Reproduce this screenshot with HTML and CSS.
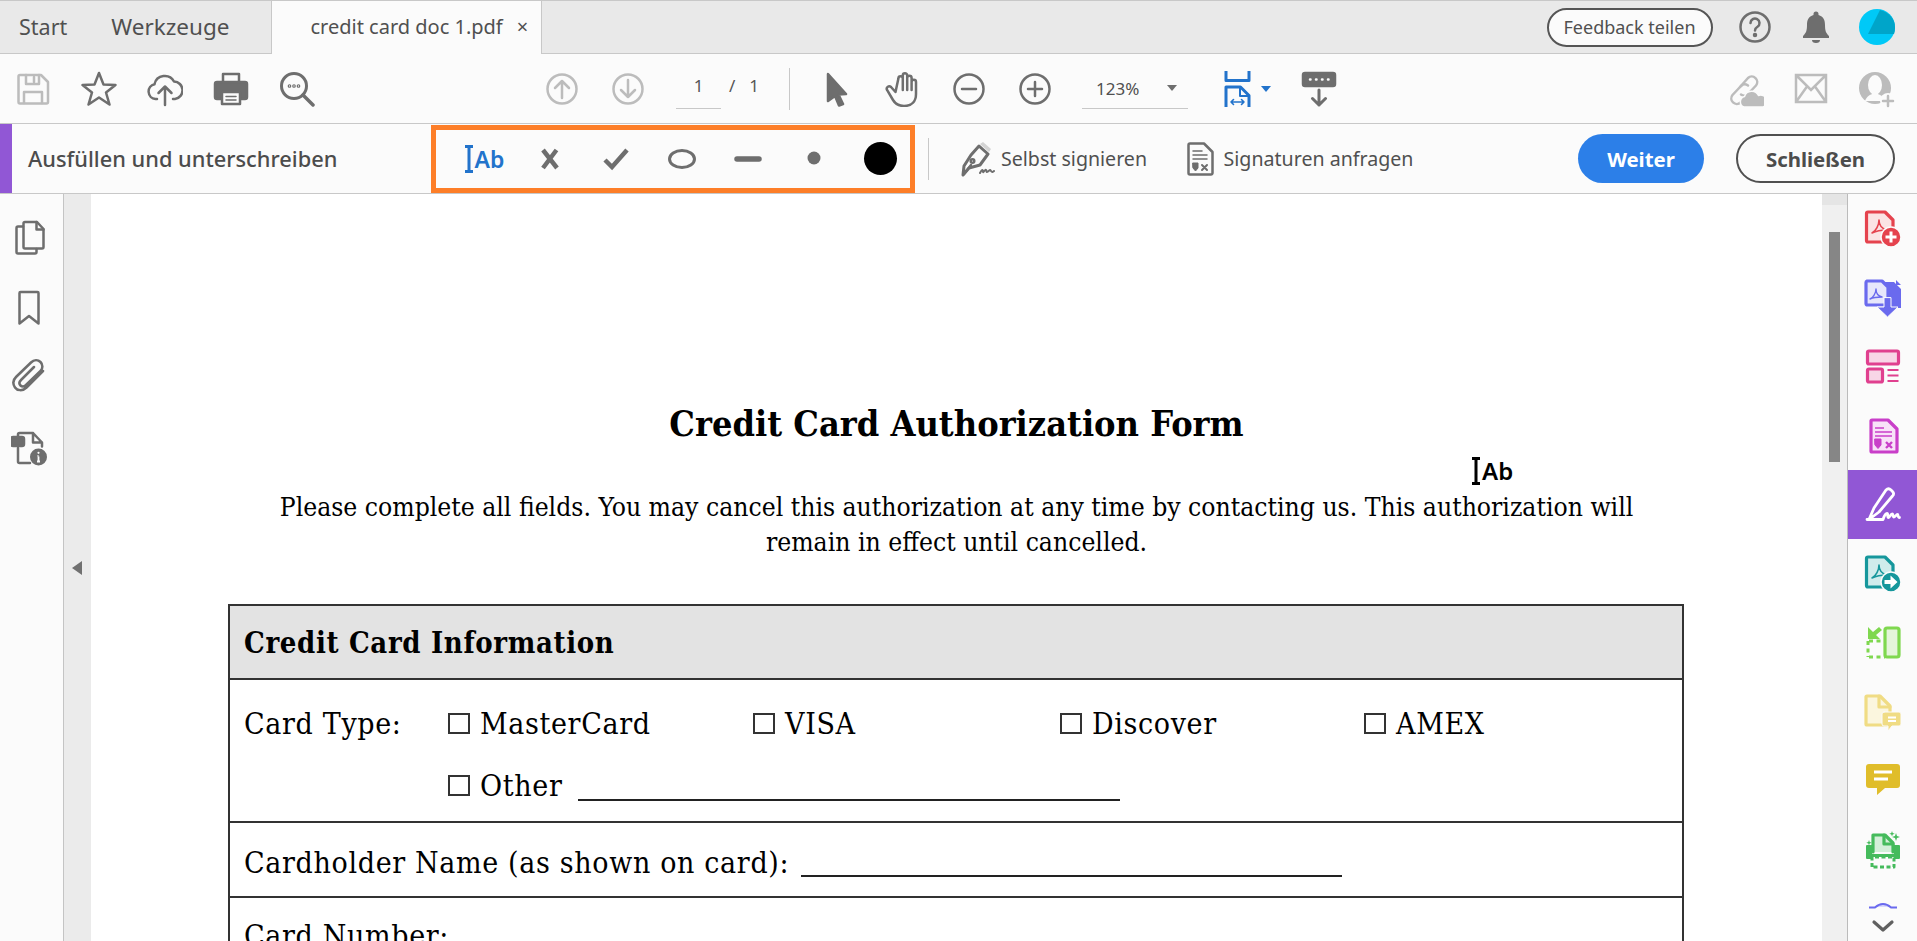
FILE: index.html
```html
<!DOCTYPE html>
<html lang="de">
<head>
<meta charset="utf-8">
<title>credit card doc 1.pdf</title>
<link rel="stylesheet" href="styles.css">
</head>
<body>
<header class="tabs">
  <a class="tab tab-start">Start</a>
  <a class="tab tab-tools">Werkzeuge</a>
  <div class="tab-doc"><span>credit card doc 1.pdf</span><span class="close">×</span></div>
  <div class="tabs-right">
    <button class="feedback">Feedback teilen</button>
    <svg class="ic i-help" width="36" height="36" viewBox="0 0 36 36"><circle cx="18" cy="18" r="14.5"/><path d="M13.5 14a4.5 4.5 0 1 1 7 3.8c-1.6 1-2.5 2-2.5 3.7"/><circle cx="18" cy="26" r="1" fill="currentColor"/></svg>
    <svg class="ic i-bell" width="30" height="36" viewBox="0 0 30 36"><path fill="currentColor" stroke="none" d="M12.5 5a2.5 2.5 0 0 1 5 0v1c5 1.500 6.500 5 6.500 10 0 6 1 8 4 11v2H2v-2c3-3 4-5 4-11 0-5 1.500-8.500 6.500-10zM11 31h8a4 3 0 0 1-8 0z"/></svg>
    <svg class="i-avatar" width="36" height="36" viewBox="0 0 36 36"><circle cx="18" cy="18" r="18" fill="#00c9f7"/><path d="M21 1 9 25h26c1-3 1-5 1-7 0-8-6-15-15-17z" fill="#00a5c9"/></svg>
  </div>
</header>

<nav class="toolbar">
  <div class="tgroup">
    <div class="slot dis"><svg class="ic" width="36" height="36" viewBox="0 0 36 36"><path d="M5 4h21l7 7v20a1.500 1.500 0 0 1-1.500 1.500H5A1.500 1.500 0 0 1 3.500 31V5.500A1.500 1.500 0 0 1 5 4z"/><path d="M11 4v9h13V4M19 6v5M9 32V21h18v11"/></svg></div>
    <div class="slot"><svg class="ic" width="36" height="36" viewBox="0 0 36 36"><path d="M18 2l4.500 11.500 12 .5L25 21.500l3.500 12L18 26.500 7.500 33.500l3.500-12L1.500 14l12-.5z"/></svg></div>
    <div class="slot"><svg class="ic" width="36" height="36" viewBox="0 0 36 36"><path d="M10 28H8.500a7.500 7.500 0 0 1-1-14.800A10.500 10.500 0 0 1 27 10.500a8.800 8.800 0 0 1 1 17.500h-2"/><path d="M18 34V16M11.500 22l6.500-6.500 6.500 6.500"/></svg></div>
    <div class="slot"><svg class="ic" width="36" height="36" viewBox="0 0 36 36"><path d="M10 11V3h16v8"/><path fill="currentColor" d="M4 11h28a2 2 0 0 1 2 2v13a2 2 0 0 1-2 2H4a2 2 0 0 1-2-2V13a2 2 0 0 1 2-2z"/><path fill="#fbfbfb" d="M9 21h18v12H9z"/><path d="M13 25.500h10M13 29h10" stroke-width="1.500"/></svg></div>
    <div class="slot"><svg class="ic" width="36" height="36" viewBox="0 0 36 36"><circle cx="15" cy="15" r="12.500" stroke-width="3"/><path d="M24 24l10 10" stroke-width="3.500"/><circle cx="10.500" cy="15" r=".6"/><circle cx="15" cy="15" r=".6"/><circle cx="19.500" cy="15" r=".6"/></svg></div>
  </div>
  <div class="tgroup nav">
    <div class="slot dis"><svg class="ic" width="36" height="36" viewBox="0 0 36 36"><circle cx="18" cy="18" r="14.500"/><path d="M18 27V10M11 17l7-7 7 7"/></svg></div>
    <div class="slot dis"><svg class="ic" width="36" height="36" viewBox="0 0 36 36"><circle cx="18" cy="18" r="14.500"/><path d="M18 9v17M11 19l7 7 7-7"/></svg></div>
  </div>
  <div class="pager"><span class="page-in">1</span><span class="page-sep">/</span><span class="page-total">1</span></div>
  <div class="vsep"></div>
  <div class="tgroup tools">
    <div class="slot"><svg class="ic" width="36" height="36" viewBox="0 0 36 36"><path fill="currentColor" d="M9 3l18 20-7.500.5L24 33l-4 1.500-4-9.500-7 5z"/></svg></div>
    <div class="slot"><svg class="ic" width="36" height="36" viewBox="0 0 36 36"><path d="M10.500 21l-4.500-5a2.500 2.500 0 0 0-3.800 3.200L8 29c3 5 7 6 11 6 8 0 12-5 12-12V11a2.200 2.200 0 0 0-4.400 0v8-12a2.200 2.200 0 0 0-4.400 0v12V4.500a2.200 2.200 0 0 0-4.400 0V19 7.500a2.200 2.200 0 0 0-4.400 0z"/></svg></div>
    <div class="slot"><svg class="ic" width="36" height="36" viewBox="0 0 36 36"><circle cx="18" cy="18" r="14.500"/><path d="M11 18h14"/></svg></div>
    <div class="slot"><svg class="ic" width="36" height="36" viewBox="0 0 36 36"><circle cx="18" cy="18" r="14.500"/><path d="M11 18h14M18 11v14"/></svg></div>
  </div>
  <div class="zoom-box"><span>123%</span><i class="tri"></i></div>
  <div class="fit">
    <svg class="ic blue" width="27" height="36" viewBox="0 0 27 36"><path d="M2 0v9.500h23V0" stroke-linecap="butt" stroke-width="3"/><path d="M2 36V16h14.500l8.500 8.500V36" stroke-linecap="butt" stroke-width="3"/><path d="M16 16v9h9" stroke-width="2"/><path d="M7 31h13M9.500 28.500L7 31l2.500 2.500M17.500 28.500L20 31l-2.500 2.500" stroke-width="1.600"/></svg>
    <i class="tri blue-tri"></i>
  </div>
  <div class="slot read"><svg class="ic" width="36" height="36" viewBox="0 0 36 36"><rect x="2" y="2" width="32" height="13" rx="2" fill="currentColor"/><path d="M9 8.500h.5M15 8.500h.5M21 8.500h.5M27 8.500h.5" stroke="#fbfbfb" stroke-width="2.500"/><path d="M18 19v15M11.500 27.500l6.500 6.500 6.500-6.500" stroke-width="3"/></svg></div>
  <div class="tgroup share">
    <div class="slot dis"><svg class="ic" width="38" height="38" viewBox="0 0 38 38"><path stroke-width="2.500" d="M14 17l8-9a5.500 5.500 0 0 1 8 7.500l-8 8.500a5.500 5.500 0 0 1-7 .5"/><path stroke-width="2.500" d="M22 15.500a5.500 5.500 0 0 0-7 .5L6.500 25a5.500 5.500 0 0 0 8 7.500l3-3"/><path fill="#bcbcbc" stroke="#fbfbfb" stroke-width="1.500" d="M18 37a5.500 5.500 0 0 1 .5-10.500 7.500 7.500 0 0 1 14-1 6 6 0 0 1 4.500 11.500z"/></svg></div>
    <div class="slot dis"><svg class="ic" width="36" height="36" viewBox="0 0 36 36"><path d="M3 5h30v27H3zM3 5l15 15L33 5M3 32l11-15.500M33 32L22 16.500" stroke-linejoin="miter" stroke-linecap="butt"/></svg></div>
    <div class="slot dis"><svg class="ic" width="38" height="38" viewBox="0 0 38 38"><circle cx="17" cy="18" r="16" fill="currentColor" stroke="none"/><ellipse cx="17" cy="15" rx="7" ry="10" fill="#fbfbfb" stroke="none"/><path d="M7 31c2-5 5-6 7-7h6c2 1 5 2 7 7" fill="#fbfbfb" stroke="none"/><circle cx="30" cy="31" r="8" fill="#fbfbfb" stroke="none"/><path d="M30 26v10M25 31h10"/></svg></div>
  </div>
</nav>

<section class="fillbar">
  <div class="accent"></div>
  <h1 class="fill-title">Ausfüllen und unterschreiben</h1>
  <div class="fill-tools">
    <div class="ftool tool-ab"><svg class="ic blue" width="10" height="28" viewBox="0 0 10 28"><path d="M1 1.500h8M1 26.500h8M5 1.500v25" stroke-width="3" stroke-linecap="butt"/></svg><span class="ab">Ab</span></div>
    <div class="ftool"><svg class="ic" width="24" height="24" viewBox="0 0 24 24"><path d="M5 3l14 18M18.500 3L5 21" stroke-width="4.500" stroke-linecap="butt"/></svg></div>
    <div class="ftool"><svg class="ic" width="26" height="24" viewBox="0 0 26 24"><path d="M2 13l7 7L24 3" stroke-width="4.500" stroke-linecap="butt" stroke-linejoin="miter"/></svg></div>
    <div class="ftool"><svg class="ic" width="30" height="24" viewBox="0 0 30 24"><ellipse cx="15" cy="12" rx="12.500" ry="8.500" stroke-width="3"/></svg></div>
    <div class="ftool"><svg class="ic" width="30" height="24" viewBox="0 0 30 24"><path d="M4 12h22" stroke-width="5.500"/></svg></div>
    <div class="ftool"><svg class="ic" width="16" height="24" viewBox="0 0 16 24"><circle cx="8" cy="11" r="6.500" fill="currentColor" stroke="none"/></svg></div>
    <div class="ftool"><span class="swatch"></span></div>
  </div>
  <div class="vsep fill-sep"></div>
  <div class="fill-act act-self">
    <svg class="ic" width="36" height="36" viewBox="0 0 36 36"><path fill="#d4d4d4" stroke="none" d="M21 3l3-2 8 7-2 3z"/><path stroke-width="3" d="M20 5l9 8-8 11-11 3-6 7 1-9 7-11z"/><path d="M5 33l7-9"/><circle cx="13.500" cy="20" r="1.800"/><path d="M21 32c1.500-3 3-4 3-1.500s2-2.500 3-1.500 0 3 2 1.500 2-2 3-.5 2 1 3 0" stroke-width="2"/></svg>
    <span>Selbst signieren</span>
  </div>
  <div class="fill-act act-req">
    <svg class="ic" width="28" height="34" viewBox="0 0 28 34"><path d="M4 1.500h14L26.500 10v21a1.500 1.500 0 0 1-1.500 1.500H4A1.500 1.500 0 0 1 2.500 31V3A1.500 1.500 0 0 1 4 1.500z"/><path d="M7 9h9M7 13h14M7 17h14" stroke-width="1.500"/><path d="M7 21h5v5l-2.500 3-2.500-3z" fill="currentColor" stroke-width="1"/><path d="M16 23l5 5M21 23l-5 5" stroke-width="2"/></svg>
    <span>Signaturen anfragen</span>
  </div>
  <button class="btn-next">Weiter</button>
  <button class="btn-close">Schließen</button>
</section>

<main class="workspace">
  <aside class="rail">
    <div class="rail-item"><svg class="ic" width="36" height="36" viewBox="0 0 36 36"><path d="M12 6.500H7a1.500 1.500 0 0 0-1.500 1.500v24A1.500 1.500 0 0 0 7 33.500h17a1.500 1.500 0 0 0 1.500-1.500v-3"/><path d="M14 2h12l6.500 7v18a1.500 1.500 0 0 1-1.500 1.500H14a1.500 1.500 0 0 1-1.500-1.500V3.500A1.500 1.500 0 0 1 14 2z"/><path d="M25.500 2v7.500h7"/></svg></div>
    <div class="rail-item"><svg class="ic" width="36" height="36" viewBox="0 0 36 36"><path d="M9.500 2h17a1 1 0 0 1 1 1v30.500L18 26 8.500 33.500V3a1 1 0 0 1 1-1z"/></svg></div>
    <div class="rail-item rail-clip"><svg class="ic" width="36" height="36" viewBox="0 0 36 36"><path d="M32 14L15.500 30.500c-4 4-9.500 3-11.500 0s-2.500-7 1-10.500L20 5.500c3-3 7-3 9.500-.5s2.500 6.500 0 9L15 28c-2 2-4 2-5.500.5s-1.500-3.500.5-5.500l13-13"/></svg></div>
    <div class="rail-item"><svg class="ic" width="36" height="36" viewBox="0 0 36 36"><path d="M7 9V4.500A1.500 1.500 0 0 1 8.500 3H22l9 9.500v4M22 3v9.500h9M7 18v13.500A1.500 1.500 0 0 0 8.500 33H19"/><rect x="0" y="7" width="13" height="9" rx="2" fill="currentColor"/><circle cx="27.500" cy="27" r="8.500" fill="currentColor" stroke="none"/><path d="M27.500 26.500v5M26 31.500h3M26.500 26h1" stroke="#fbfbfb" stroke-width="1.800" stroke-linecap="butt"/><circle cx="27.500" cy="22.800" r="1.100" fill="#fbfbfb" stroke="none"/></svg></div>
  </aside>
  <div class="gutter"><i class="collapse"></i></div>

  <article class="page">
    <h2 class="doc-title">Credit Card Authorization Form</h2>
    <p class="doc-intro">Please complete all fields. You may cancel this authorization at any time by contacting us. This authorization will<br>remain in effect until cancelled.</p>
    <div class="doc-table">
      <div class="doc-head">Credit Card Information</div>
      <div class="doc-row row-types">
        <span class="lbl">Card Type:</span>
        <span class="opt"><i class="box"></i>MasterCard</span>
        <span class="opt"><i class="box"></i>VISA</span>
        <span class="opt"><i class="box"></i>Discover</span>
        <span class="opt"><i class="box"></i>AMEX</span>
        <span class="opt opt-other"><i class="box"></i>Other<i class="rule rule-other"></i></span>
      </div>
      <div class="doc-row row-name">Cardholder Name (as shown on card):<i class="rule rule-name"></i></div>
      <div class="doc-row row-number">Card Number:</div>
    </div>
    <div class="cursor"><svg width="10" height="28" viewBox="0 0 10 28"><path d="M1 1.500h8M1 26.500h8M5 1.500v25" stroke="#000" stroke-width="3" fill="none"/></svg><span>Ab</span></div>
  </article>

  <div class="scroller"><div class="scroll-top"></div><div class="scroll-thumb"></div></div>

  <aside class="apps">
    <div class="app"><svg class="ic red" width="38" height="38" viewBox="0 0 38 38"><path fill="#fbe3e4" d="M4 2h17l8 8v22H4a1.500 1.500 0 0 1-1.500-1.500v-27A1.500 1.500 0 0 1 4 2z"/><path d="M8 23c4-2 7-8 7-13 0 5 3 9 8 10-4 0-11 1-15 3z" stroke-width="1.600"/><circle cx="27" cy="27" r="10" fill="currentColor" stroke="#fbfbfb" stroke-width="1.500"/><path d="M27 21.500v11M21.500 27h11" stroke="#fff" stroke-width="3" stroke-linecap="butt"/></svg></div>
    <div class="app"><svg class="ic indigo" width="38" height="38" viewBox="0 0 38 38"><path fill="currentColor" stroke="none" d="M20 3h10l7 7v19H20zM32 1l5 5h-5z"/><path fill="#e6e6fb" d="M3 2h15l6 6v18H3.500A1.500 1.500 0 0 1 2 24.500v-21A1.500 1.500 0 0 1 3 2z"/><path d="M6 20c3-1 6-6 6-10 0 4 2 7 6 8-3 0-8 0-12 2z" stroke-width="1.400"/><path fill="currentColor" stroke="#fbfbfb" stroke-width="1" d="M20 19v9h-7l10.500 10L34 28h-7v-9z"/></svg></div>
    <div class="app"><svg class="ic pink" width="38" height="38" viewBox="0 0 38 38"><rect x="3.500" y="3" width="31" height="13" rx="1.500" fill="#f8d6e7"/><rect x="3.500" y="21" width="15" height="13" rx="1.500" fill="#f8d6e7"/><path d="M23.500 22h11M23.500 27.500h11M23.500 33h11" stroke-width="1.800" stroke-linecap="butt"/></svg></div>
    <div class="app"><svg class="ic magenta" width="34" height="38" viewBox="0 0 34 38"><path fill="#f8e1f8" d="M6 3h16l9 9v22a1 1 0 0 1-1 1H6a1 1 0 0 1-1-1V4a1 1 0 0 1 1-1z"/><path d="M9 11h9M9 15h17M9 19h17" stroke-width="1.600" stroke-linecap="butt"/><path d="M9 22h6v6l-3 3.500L9 28z" fill="currentColor" stroke-width="1"/><path d="M20 25l6 6M26 25l-6 6" stroke-width="2.400" stroke-linecap="butt"/></svg></div>
    <div class="app app-on"><svg class="ic white" width="38" height="38" viewBox="0 0 38 38"><path d="M22 4c1.500-1.500 3.500-1.500 5 0l1.500 1.500c1.500 1.500 1.500 3 0 4.500L15 26l-10 7.500L10 22z" stroke-width="2.800"/><path d="M3 33.500h16c1-3 2-6 4-6 1.500 0 0 4 1.500 4s2-4 4-3.500c1 .5 0 3 1.500 3s2-2.500 3.500-2.500c1 0 0 3 2 3" stroke-width="2.800"/></svg></div>
    <div class="app"><svg class="ic teal" width="38" height="38" viewBox="0 0 38 38"><path fill="#d0ecec" d="M4 2h17l8 8v22H4a1.500 1.500 0 0 1-1.500-1.500v-27A1.500 1.500 0 0 1 4 2z"/><path d="M8 23c4-2 7-8 7-13 0 5 3 9 8 10-4 0-11 1-15 3z" stroke-width="1.600"/><circle cx="27" cy="27" r="10" fill="currentColor" stroke="#fbfbfb" stroke-width="1.500"/><path fill="#fff" stroke="none" d="M20.500 25h6v-4.500l7 6.500-7 6.500V29h-6z"/></svg></div>
    <div class="app"><svg class="ic lime" width="38" height="38" viewBox="0 0 38 38"><rect x="21" y="4" width="14" height="29" rx="2" fill="#e4f5da"/><path d="M5 17h17M5 33h16M4 17v16" stroke-width="3" stroke-dasharray="4 3.500" stroke-linecap="butt"/><path fill="currentColor" stroke="none" d="M4 3v12h12l-4-4 6-5-3-3-6 5z"/></svg></div>
    <div class="app"><svg class="ic pale" width="38" height="38" viewBox="0 0 38 38"><path fill="#fbf6de" d="M3 3h13l10 10v19H3a1 1 0 0 1-1-1V4a1 1 0 0 1 1-1z"/><path d="M15 3v11h11"/><path fill="currentColor" stroke="#fbfbfb" stroke-width="1" d="M20 19h15a2 2 0 0 1 2 2v10a2 2 0 0 1-2 2h-7l-4 5v-5h-4a2 2 0 0 1-2-2V21a2 2 0 0 1 2-2z"/><path d="M24 24.500h8M24 28h8" stroke="#fff" stroke-width="2" stroke-linecap="butt"/></svg></div>
    <div class="app"><svg class="ic gold" width="36" height="36" viewBox="0 0 36 36"><path fill="currentColor" stroke="none" d="M4 1h28a3 3 0 0 1 3 3v18a3 3 0 0 1-3 3H20l-8 7v-7H4a3 3 0 0 1-3-3V4a3 3 0 0 1 3-3z"/><path d="M9 9h18M9 16h14" stroke="#fff" stroke-width="3" stroke-linecap="butt"/></svg></div>
    <div class="app"><svg class="ic green" width="38" height="38" viewBox="0 0 38 38"><path fill="#d4efd9" d="M9 21V4h12l8 8v9"/><path d="M20 4v9h9"/><path fill="currentColor" stroke="none" d="M3 14h5v9h22v-9h5a1 1 0 0 1 1 1v12a1 1 0 0 1-1 1H3a1 1 0 0 1-1-1V15a1 1 0 0 1 1-1z"/><path d="M8 36V26h22v10z" fill="#fbfbfb" stroke-width="3" stroke-dasharray="4 2.500" stroke-linecap="butt"/><path fill="currentColor" stroke="none" d="M32 2l1 3 3 1-3 1-1 3-1-3-3-1 3-1zM28 0l.7 2 2 .7-2 .7-.7 2-.7-2-2-.7 2-.7zM5 9l.7 2 2 .7-2 .7L5 14.500l-.7-2-2-.7 2-.7z"/></svg></div>
    <div class="app-more">
      <svg class="ic indigo" width="30" height="10" viewBox="0 0 30 10"><path fill="#d9d9fb" stroke="none" d="M6 8q9-8 18 0z"/><path d="M1 8.500h6q8-7 16 0h6" stroke-width="1.800" stroke-linecap="butt"/></svg>
      <svg class="ic chev" width="24" height="14" viewBox="0 0 24 14"><path d="M3 3l9 8 9-8" stroke-width="3.200"/></svg>
    </div>
  </aside>
</main>
</body>
</html>
```

FILE: styles.css
```css
* { box-sizing: border-box; }
html, body { margin: 0; padding: 0; }
body {
  width: 1917px;
  height: 941px;
  overflow: hidden;
  background: #fbfbfb;
  color: #505050;
  font-family: "Noto Sans", "Liberation Sans", sans-serif;
  display: flex;
  flex-direction: column;
}
svg { display: block; flex: none; }
.ic {
  fill: none;
  stroke: currentColor;
  stroke-width: 2.5;
  stroke-linecap: round;
  stroke-linejoin: round;
  color: #6e6e6e;
}
.app .ic { stroke-width: 3.2; }
.ic.blue { color: #2273cb; }
.dis .ic { color: #bcbcbc; }
.ic.red { color: #e5434e; }
.ic.indigo { color: #6a6aee; }
.ic.pink { color: #e0408f; }
.ic.magenta { color: #c93fc9; }
.ic.white { color: #fff; }
.ic.teal { color: #16979c; }
.ic.lime { color: #7fd84f; }
.ic.pale { color: #f0dc84; }
.ic.gold { color: #e0bd2a; }
.ic.green { color: #45bb5c; }
.ic.chev { color: #606060; }

/* tab bar */
.tabs {
  height: 54px;
  flex: none;
  display: flex;
  align-items: stretch;
  background: #e9e9e9;
  border-top: 1px solid #c8c8c8;
  border-bottom: 1px solid #c8c8c8;
  font-size: 20px;
  line-height: 52px;
}
.tab { font-size: 21.500px; }
.tab-start { margin-left: 19px; }
.tab-tools { margin-left: 44px; font-size: 22.500px; }
.tab-doc {
  margin-left: 42px;
  width: 271px;
  height: 53px;
  padding-left: 38px;
  display: flex;
  gap: 14px;
  background: #fbfbfb;
  border-left: 1px solid #c8c8c8;
  border-right: 1px solid #c8c8c8;
}
.close { font-size: 20px; }
.tabs-right {
  margin-left: auto;
  display: flex;
  align-items: center;
}
.feedback {
  width: 166px;
  height: 39px;
  padding: 0;
  border: 2px solid #555;
  border-radius: 20px;
  background: #fbfbfb;
  color: #505050;
  font: 18px "Noto Sans", sans-serif;
}
.i-help { margin-left: 24px; }
.i-bell { margin-left: 28.500px; }
.i-avatar { margin-left: 28px; margin-right: 22px; }

/* main toolbar */
.toolbar {
  height: 70px;
  flex: none;
  display: flex;
  align-items: center;
  border-bottom: 1px solid #c8c8c8;
}
.tgroup { display: flex; }
.slot {
  width: 66px;
  display: flex;
  justify-content: center;
}
.nav { margin-left: 199px; }
.pager {
  margin-left: 15px;
  display: flex;
  font-size: 17px;
  color: #555;
}
.page-in {
  width: 45px;
  height: 40px;
  line-height: 34px;
  text-align: center;
  border-bottom: 1px solid #c8c8c8;
}
.page-sep { margin-left: 8px; line-height: 34px; }
.page-total { margin-left: 14px; line-height: 34px; }
.vsep { width: 1px; height: 42px; background: #c8c8c8; }
.pager + .vsep { margin-left: 30px; }
.tools { margin-left: 14px; }
.zoom-box {
  margin-left: 14px;
  width: 106px;
  height: 40px;
  padding-left: 14px;
  display: flex;
  align-items: center;
  gap: 28px;
  font-size: 17px;
  border-bottom: 1px solid #c8c8c8;
}
.tri {
  width: 0;
  height: 0;
  flex: none;
  border-left: 5.500px solid transparent;
  border-right: 5.500px solid transparent;
  border-top: 6px solid #6e6e6e;
}
.tri.blue-tri { border-top-color: #2273cb; }
.fit {
  margin-left: 36px;
  display: flex;
  align-items: center;
  gap: 10px;
}
.read { margin-left: 15px; }
.share { margin-left: auto; margin-right: 7px; }

/* fill & sign bar */
.fillbar {
  height: 70px;
  flex: none;
  display: flex;
  align-items: center;
  border-bottom: 1px solid #c8c8c8;
}
.accent { width: 12px; height: 69px; background: #9157d5; }
.fill-title {
  margin: 0 0 0 16px;
  width: 403px;
  font-size: 21.800px;
  font-weight: 500;
  color: #4c4c4c;
}
.fill-tools {
  width: 484px;
  height: 68px;
  padding-left: 30px;
  display: flex;
  align-items: center;
  border: 5px solid #fd7e28;
}
.ftool {
  width: 66px;
  flex: none;
  display: flex;
  justify-content: center;
  align-items: center;
}
.tool-ab { gap: 1px; margin-left: -15px; }
.ab { color: #2273cb; font-size: 23px; font-weight: 600; line-height: 28px; }
.swatch {
  width: 33px;
  height: 33px;
  border-radius: 50%;
  background: #000;
}
.fill-sep { margin-left: 13px; }
.fill-act {
  display: flex;
  align-items: center;
  font-size: 19.600px;
  color: #505050;
}
.act-self { margin-left: 30px; gap: 6px; }
.act-req { margin-left: 38.500px; gap: 10px; }
.btn-next, .btn-close {
  height: 49px;
  padding: 0;
  border-radius: 25px;
  font: 700 20.400px "Noto Sans", sans-serif;
}
.btn-next {
  margin-left: auto;
  width: 126px;
  border: 0;
  background: #2c7fe8;
  color: #fff;
}
.btn-close {
  margin: 0 22px 0 32px;
  width: 159px;
  border: 2px solid #505050;
  background: #fbfbfb;
  color: #4c4c4c;
}

/* workspace */
.workspace {
  flex: 1;
  min-height: 0;
  display: flex;
}
.rail {
  width: 64px;
  flex: none;
  padding: 9px 5px 0 0;
  border-right: 1px solid #c4c4c4;
}
.rail-item {
  height: 70px;
  display: flex;
  align-items: center;
  justify-content: center;
}
.rail-clip { margin: -3px 0 3px; }
.gutter {
  width: 27px;
  flex: none;
  padding: 367px 0 0 8px;
  background: #ebebeb;
}
.collapse {
  display: block;
  width: 0;
  height: 0;
  border-top: 7.500px solid transparent;
  border-bottom: 7.500px solid transparent;
  border-right: 10px solid #707070;
}
.page {
  position: relative;
  flex: 1;
  min-width: 0;
  padding-top: 206px;
  background: #fff;
  color: #000;
  font-family: "DejaVu Serif Condensed", "DejaVu Serif", serif;
  font-size: 30px;
  letter-spacing: .65px;
  overflow: hidden;
}
.doc-title {
  margin: 0;
  font-size: 35.800px;
  letter-spacing: 0;
  line-height: 46px;
  text-align: center;
  font-weight: 700;
}
.doc-intro {
  margin: 44px 0 0;
  font-size: 26.250px;
  letter-spacing: 0;
  line-height: 35px;
  text-align: center;
}
.doc-table {
  width: 1456px;
  margin: 44px 0 0 137px;
  border-top: 2px solid #333;
  border-left: 2px solid #333;
  border-right: 2px solid #333;
}
.doc-head {
  height: 74px;
  padding-left: 14px;
  font-size: 29px;
  line-height: 74px;
  font-weight: 700;
  background: #e3e3e3;
  border-bottom: 2px solid #333;
}
.doc-row { padding-left: 14px; }
.row-types {
  height: 143px;
  display: grid;
  grid-template-columns: 204px 305px 307px 304px 1fr;
  grid-auto-rows: 62px;
  align-items: center;
  padding-top: 12px;
  border-bottom: 2px solid #333;
}
.opt { display: flex; align-items: center; }
.opt-other { grid-column: 2 / -1; }
.box {
  width: 22px;
  height: 21px;
  margin-right: 10px;
  border: 2px solid #333;
}
.rule {
  display: block;
  height: 2px;
  background: #222;
  align-self: flex-end;
}
.rule-other { width: 542px; margin: 0 0 2px 16px; }
.row-name {
  height: 75px;
  padding-top: 5px;
  display: flex;
  align-items: center;
  border-bottom: 2px solid #333;
}
.rule-name { width: 541px; margin: 0 0 19px 12px; }
.row-number { padding-top: 20px; height: 80px; }
.cursor {
  position: absolute;
  left: 1380px;
  top: 260px;
  display: flex;
  gap: 1px;
  align-items: center;
  font-family: "Noto Sans", sans-serif;
  font-size: 24px;
  letter-spacing: 0;
  font-weight: 600;
}

/* scrollbar */
.scroller {
  width: 26px;
  flex: none;
  background: #f0f0f0;
  border-right: 1px solid #bbb;
}
.scroll-top { height: 11px; background: #e5e5e5; }
.scroll-thumb {
  width: 11px;
  height: 230px;
  margin: 27px 0 0 7px;
  background: #868686;
}

/* right rail */
.apps { width: 69px; flex: none; }
.app {
  height: 69px;
  display: flex;
  align-items: center;
  justify-content: center;
}
.app-on { background: #9157d5; }
.app-more {
  padding-top: 15px;
  display: flex;
  flex-direction: column;
  align-items: center;
  gap: 10px;
}
```
